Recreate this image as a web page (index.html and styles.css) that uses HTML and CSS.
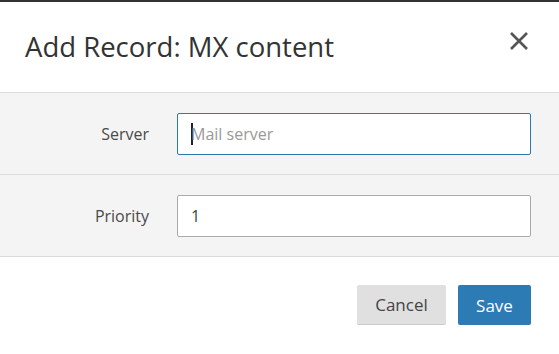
FILE: index.html
```html
<!DOCTYPE html>
<html>
<head>
<meta charset="utf-8">
<link rel="stylesheet" href="styles.css">
</head>
<body>
<div class="modal">
  <div class="modal-header">
    <h1 class="modal-title">Add Record: MX content</h1>
    <button class="close" aria-label="Close">
      <svg width="20" height="20" viewBox="0 0 20 20"><path d="M2 2 L18 18 M18 2 L2 18" stroke="#555" stroke-width="2.6" fill="none"/></svg>
    </button>
  </div>
  <div class="modal-body">
    <div class="form-row">
      <label class="form-label">Server</label>
      <div class="field focused"><span class="caret"></span><span class="placeholder">Mail server</span></div>
    </div>
    <div class="form-row">
      <label class="form-label">Priority</label>
      <div class="field"><span class="value">1</span></div>
    </div>
  </div>
  <div class="modal-footer">
    <button class="btn btn-cancel">Cancel</button>
    <button class="btn btn-save">Save</button>
  </div>
</div>
</body>
</html>
```
FILE: styles.css
```css
* { box-sizing: border-box; }
html, body { margin: 0; padding: 0; background: #fff; }
body { font-family: "Open Sans", "Liberation Sans", sans-serif; color: #333; }
.modal { border-top: 2px solid #333; width: 559px; }
.modal-header {
  height: 91px;
  display: flex;
  align-items: center;
  justify-content: space-between;
  padding: 0 31px 0 25px;
  border-bottom: 1px solid #dcdcdc;
}
.modal-title { margin: 0; font-weight: 400; font-size: 27.5px; color: #333; line-height: 1; }
.close { background: none; border: 0; padding: 0; margin-top: -12px; margin-right: -1px; display: flex; }
.modal-body { background: #f4f4f4; }
.form-row {
  height: 82px;
  display: flex;
  align-items: center;
  border-bottom: 1px solid #dcdcdc;
  padding-right: 28px;
}
.form-label {
  width: 149px;
  text-align: right;
  font-size: 16px;
  color: #4a4a4a;
  margin-right: 28px;
}
.field {
  flex: 1;
  height: 42px;
  background: #fff;
  border: 1px solid #aaa;
  border-radius: 2px;
  display: flex;
  align-items: center;
  padding-left: 13px;
  font-size: 16px;
}
.field.focused { border-color: #2a7ab0; }
.caret { width: 2px; height: 22px; background: #222; margin-right: -2px; }
.placeholder { color: #999; }
.value { color: #444; }
.modal-footer {
  display: flex;
  justify-content: flex-end;
  gap: 12px;
  padding: 28px 28px 0 0;
}
.btn {
  height: 40px;
  border: 0;
  border-radius: 2px;
  font-family: "Open Sans", "Liberation Sans", sans-serif;
  font-size: 17px;
  padding: 0 18px;
}
.btn-cancel { background: #e0e0e0; color: #444; width: 89px; border-bottom: 1px solid #ccc; }
.btn-save { background: #2c7bb4; color: #fff; width: 73px; }
```
